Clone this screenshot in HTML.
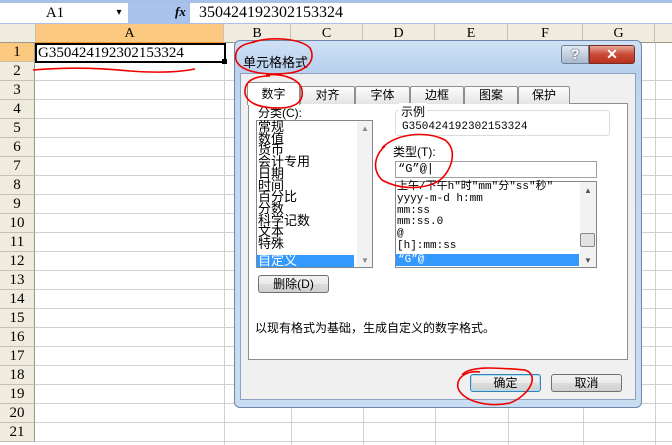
<!DOCTYPE html>
<html><head><meta charset="utf-8"><style>
*{margin:0;padding:0;box-sizing:border-box}
body{width:672px;height:445px;overflow:hidden;background:#fff;position:relative;font-family:"Liberation Serif","Noto Serif CJK SC","Noto Sans CJK SC",serif;font-size:13px}
.a{position:absolute}
.cj{font-family:"Liberation Sans","Noto Sans CJK SC",sans-serif;font-size:12px}
.mono{font-family:"Liberation Mono","Noto Sans CJK SC",monospace;font-size:11px}
.rh{position:absolute;left:0;width:35px;height:19px;background:#efebde;border-bottom:1px solid #c5c2b2;border-right:1px solid #9c9a8c;text-align:center;font-size:15px;line-height:19px}
.ch{position:absolute;top:24px;height:19px;background:#efebde;border-right:1px solid #c5c2b2;border-bottom:1px solid #9c9a8c;text-align:center;font-size:14px;line-height:19px}
.hl{position:absolute;left:35px;right:0;height:1px;background:#d0d0d0}
.vl{position:absolute;top:43px;bottom:0;width:1px;background:#d0d0d0}
.tab{position:absolute;top:86px;height:18px;background:linear-gradient(#fdfdfd,#e4e4e4);border:1px solid #8e8f8f;border-bottom:none;border-radius:2px 2px 0 0;text-align:center;line-height:17px}
.btn{position:absolute;height:18px;border:1px solid #707070;border-radius:3px;background:linear-gradient(#f2f2f2,#ebebeb 50%,#dddddd 51%,#cfcfcf);text-align:center;line-height:16px}
</style></head><body>
<div class="a" style="left:0;top:0;width:672px;height:24px;background:#a6c0e8"></div>
<div class="a" style="left:0;top:3px;width:110px;height:20px;background:#fff;text-align:center;font-size:15px;line-height:20px">A1</div>
<div class="a" style="left:110px;top:3px;width:18px;height:20px;background:#fff;text-align:center;font-size:10px;line-height:20px">▾</div>
<div class="a" style="left:128px;top:3px;width:60px;height:20px;background:#a9c3ec"></div>
<div class="a" style="left:175px;top:4px;font-style:italic;font-size:13px;font-weight:bold">fx</div>
<div class="a" style="left:190px;top:3px;right:0;height:20px;background:#fff;font-size:16px;line-height:20px;padding-left:9px">350424192302153324</div>
<div class="ch" style="left:0;width:36px"></div>
<div class="ch" style="left:36px;width:188px;background:#fbc97f;border-bottom-color:#f29436">A</div>
<div class="ch" style="left:224px;width:67px">B</div>
<div class="ch" style="left:291px;width:72px">C</div>
<div class="ch" style="left:363px;width:72px">D</div>
<div class="ch" style="left:435px;width:73px">E</div>
<div class="ch" style="left:508px;width:75px">F</div>
<div class="ch" style="left:583px;width:72px">G</div>
<div class="ch" style="left:655px;width:20px"></div>
<div class="vl" style="left:224px"></div><div class="vl" style="left:291px"></div><div class="vl" style="left:363px"></div><div class="vl" style="left:435px"></div><div class="vl" style="left:508px"></div><div class="vl" style="left:583px"></div><div class="vl" style="left:655px"></div>
<div class="rh" style="top:43px;background:#fbc97f">1</div>
<div class="rh" style="top:62px">2</div><div class="rh" style="top:81px">3</div><div class="rh" style="top:100px">4</div><div class="rh" style="top:119px">5</div><div class="rh" style="top:138px">6</div><div class="rh" style="top:157px">7</div><div class="rh" style="top:176px">8</div><div class="rh" style="top:195px">9</div><div class="rh" style="top:214px">10</div><div class="rh" style="top:233px">11</div><div class="rh" style="top:252px">12</div><div class="rh" style="top:271px">13</div><div class="rh" style="top:290px">14</div><div class="rh" style="top:309px">15</div><div class="rh" style="top:328px">16</div><div class="rh" style="top:347px">17</div><div class="rh" style="top:366px">18</div><div class="rh" style="top:385px">19</div><div class="rh" style="top:404px">20</div><div class="rh" style="top:423px">21</div>
<div class="hl" style="top:80px"></div><div class="hl" style="top:99px"></div><div class="hl" style="top:118px"></div><div class="hl" style="top:137px"></div><div class="hl" style="top:156px"></div><div class="hl" style="top:175px"></div><div class="hl" style="top:194px"></div><div class="hl" style="top:213px"></div><div class="hl" style="top:232px"></div><div class="hl" style="top:251px"></div><div class="hl" style="top:270px"></div><div class="hl" style="top:289px"></div><div class="hl" style="top:308px"></div><div class="hl" style="top:327px"></div><div class="hl" style="top:346px"></div><div class="hl" style="top:365px"></div><div class="hl" style="top:384px"></div><div class="hl" style="top:403px"></div><div class="hl" style="top:422px"></div><div class="hl" style="top:441px"></div>
<div class="a" style="left:35px;top:43px;width:191px;height:20px;border:2px solid #000;font-size:15px;line-height:16px;padding-left:1px;background:#fff">G350424192302153324</div>
<div class="a" style="left:222px;top:59px;width:5px;height:5px;background:#000"></div>
<div class="a" style="left:234px;top:40px;width:408px;height:368px;border:1px solid #6d86a8;border-radius:6px;background:linear-gradient(#cfe1f5,#b9d1ee 30px,#c2d8f1 60px,#c9dcf2)"></div>
<div class="a cj" style="left:243px;top:52px;font-size:13px">单元格格式</div>
<div class="a" style="left:561px;top:45px;width:28px;height:19px;border:1px solid #6d7f99;border-radius:3px 0 0 3px;background:linear-gradient(#e0e8f2,#a9b9cc);text-align:center;font:bold 14px 'Liberation Sans';color:#fff;line-height:17px;text-shadow:0 0 2px #334">?</div>
<div class="a" style="left:589px;top:45px;width:46px;height:19px;border:1px solid #7a2a22;border-radius:0 3px 3px 0;background:linear-gradient(#e8a79b,#c94a36 50%,#b8321e);text-align:center;font:bold 14px 'Liberation Sans';color:#fff;line-height:17px">✕</div>
<div class="a" style="left:240px;top:73px;width:396px;height:327px;background:#f0f0f0;border:1px solid #8da2bf"></div>
<div class="a" style="left:248px;top:103px;width:380px;height:257px;background:#fff;border:1px solid #8e8f8f"></div>
<div class="tab cj" style="left:300px;width:55px">对齐</div>
<div class="tab cj" style="left:355px;width:55px">字体</div>
<div class="tab cj" style="left:410px;width:54px">边框</div>
<div class="tab cj" style="left:464px;width:54px">图案</div>
<div class="tab cj" style="left:518px;width:52px">保护</div>
<div class="tab cj" style="left:247px;top:82px;height:23px;width:53px;background:#fff;line-height:23px">数字</div>
<div class="a cj" style="left:258px;top:104px">分类(C):</div>
<div class="a" style="left:256px;top:120px;width:117px;height:148px;border:1px solid #828790;background:#fff"></div>
<div class="a" style="left:357px;top:121px;width:15px;height:146px;background:#f2f2f2"></div>
<div class="a" style="left:361px;top:124px;font-size:8px;color:#888">▲</div>
<div class="a" style="left:361px;top:256px;font-size:8px;color:#888">▼</div>
<div class="a cj" style="left:258px;top:121px;line-height:11.7px;font-size:13px">常规<br>数值<br>货币<br>会计专用<br>日期<br>时间<br>百分比<br>分数<br>科学记数<br>文本<br>特殊</div>
<div class="a cj" style="left:257px;top:255px;width:97px;height:12px;background:#3399ff;color:#fff;line-height:12px;font-size:13px;padding-left:1px">自定义</div>
<div class="a" style="left:395px;top:110px;width:215px;height:26px;border:1px solid #dcdcdc;border-radius:3px"></div>
<div class="a cj" style="left:399px;top:103px;background:#fff;padding:0 2px">示例</div>
<div class="a mono" style="left:402px;top:121px;font-size:11px">G350424192302153324</div>
<div class="a cj" style="left:393px;top:143px">类型(T):</div>
<div class="a" style="left:395px;top:161px;width:202px;height:17px;border:1px solid #a0a0a0;background:#fff"></div>
<div class="a mono" style="left:398px;top:162px;font-size:12px">“G”@|</div>
<div class="a" style="left:395px;top:181px;width:202px;height:87px;border:1px solid #828790;background:#fff"></div>
<div class="a" style="left:580px;top:182px;width:16px;height:85px;background:#f2f2f2"></div>
<div class="a" style="left:580px;top:233px;width:15px;height:14px;border:1px solid #888;border-radius:2px;background:#e2e2e2"></div>
<div class="a" style="left:584px;top:186px;font-size:8px;color:#555">▲</div>
<div class="a" style="left:584px;top:256px;font-size:8px;color:#555">▼</div>
<div class="a mono" style="left:397px;top:182px;line-height:11.8px">上午/下午h"时"mm"分"ss"秒"<br>yyyy-m-d h:mm<br>mm:ss<br>mm:ss.0<br>@<br>[h]:mm:ss</div>
<div class="a mono" style="left:396px;top:254px;width:183px;height:12px;background:#3399ff;color:#fff;line-height:12px;padding-left:2px">“G”@</div>
<div class="btn cj" style="left:258px;top:275px;width:71px">删除(D)</div>
<div class="a cj" style="left:255px;top:319px">以现有格式为基础，生成自定义的数字格式。</div>
<div class="btn cj" style="left:470px;top:374px;width:71px;border-color:#3c7fb1;box-shadow:inset 0 0 0 1px #a8dff8">确定</div>
<div class="btn cj" style="left:551px;top:374px;width:71px">取消</div>
<svg class="a" style="left:0;top:0" width="672" height="445" fill="none" stroke="#e00" stroke-width="1.6">
<path d="M33 70 Q80 66 130 71 Q170 74 195 69"/>
<path d="M250 43 C270 36 300 38 310 48 C316 60 308 70 290 73 C265 76 240 72 236 60 C234 50 240 44 255 42"/>
<path d="M266 75 C285 73 300 80 302 90 C304 102 295 108 278 108 C258 108 244 102 245 90 C246 80 256 76 270 76"/>
<path d="M382 148 C395 134 425 130 445 140 C458 150 452 170 440 180 C425 190 400 190 382 180 C372 170 374 156 385 146"/>
<path d="M462 375 C470 365 500 368 525 370 C540 375 530 395 510 403 C485 408 462 400 458 388 C456 378 466 370 480 372"/>
</svg>
</body></html>
